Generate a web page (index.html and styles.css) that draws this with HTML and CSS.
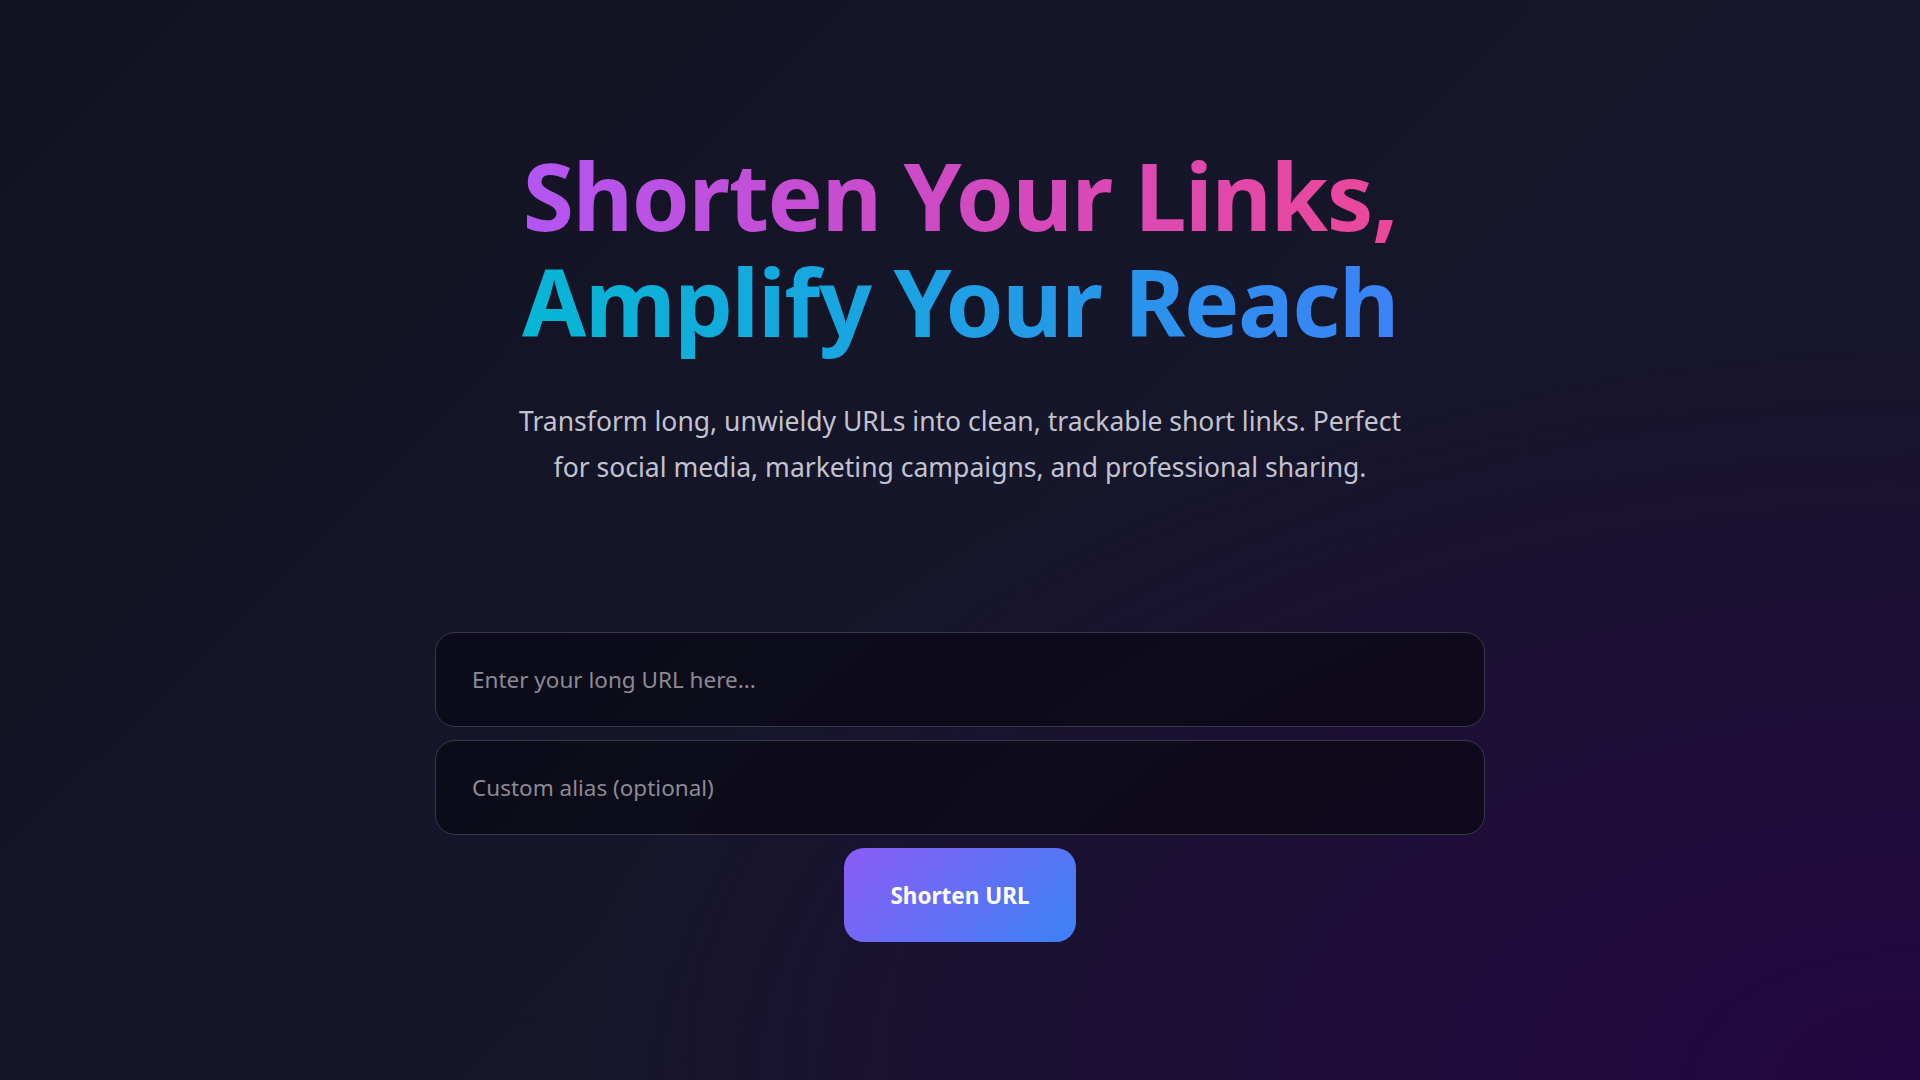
FILE: index.html
```html
<!DOCTYPE html>
<html lang="en">
<head>
<meta charset="utf-8">
<title>Shorten Your Links</title>
<link rel="stylesheet" href="styles.css">
</head>
<body>
<main class="page">
  <section class="hero">
    <h1 class="title">Shorten Your Links,<br>Amplify Your Reach</h1>
    <p class="subtitle">Transform long, unwieldy URLs into clean, trackable short links. Perfect for social media, marketing campaigns, and professional sharing.</p>
  </section>
  <form class="shorten-form" onsubmit="return false;">
    <input class="field" type="text" placeholder="Enter your long URL here...">
    <input class="field" type="text" placeholder="Custom alias (optional)">
    <button class="submit" type="submit">Shorten URL</button>
  </form>
</main>
</body>
</html>
```
FILE: styles.css
```css
* { box-sizing: border-box; }
html, body { margin: 0; padding: 0; height: 100%; }
body {
  font-family: "Noto Sans", "Open Sans", sans-serif;
  color: #e5e5ef;
  background:
    radial-gradient(ellipse 70% 70% at 100% 100%, rgba(36, 6, 66, 0.95) 0%, rgba(36, 6, 66, 0) 100%),
    linear-gradient(135deg, #121220 0%, #16162b 50%, #17152c 100%);
  min-height: 1080px;
  overflow: hidden;
}
.page {
  display: flex;
  flex-direction: column;
  align-items: center;
  padding-top: 142px;
}
.hero {
  display: flex;
  flex-direction: column;
  align-items: center;
  text-align: center;
}
.title {
  margin: 0 0 -12px;
  padding-bottom: 12px;
  font-size: 93px;
  line-height: 106px;
  font-weight: 700;
  letter-spacing: -1.4px;
  text-align: center;
  color: transparent;
  background-image:
    linear-gradient(90deg, #b256f2 0%, #d04ac2 50%, #ec4899 100%),
    linear-gradient(90deg, #06b6d4 0%, #1fa0e4 50%, #3b82f6 100%);
  background-size: 100% 114px, 100% 120px;
  background-position: 0 0, 0 114px;
  background-repeat: no-repeat;
  -webkit-background-clip: text;
  background-clip: text;
}
.subtitle {
  margin: 44px 0 0;
  max-width: 895px;
  font-size: 26.5px;
  line-height: 46px;
  color: #c3c3d0;
}
.shorten-form {
  margin-top: 142px;
  width: 1050px;
  display: flex;
  flex-direction: column;
  align-items: center;
  gap: 13px;
}
.field {
  width: 100%;
  height: 95px;
  padding: 0 36px;
  border: 1px solid #3a3848;
  border-radius: 20px;
  background: rgba(10, 9, 20, 0.72);
  color: #e5e5ef;
  font-family: inherit;
  font-size: 22.5px;
  outline: none;
}
.field::placeholder { color: #8c8a96; }
.submit {
  width: 232px;
  height: 94px;
  border: none;
  border-radius: 20px;
  background: linear-gradient(135deg, #8b5cf6 0%, #3b82f6 100%);
  color: #ffffff;
  font-family: inherit;
  font-size: 22.5px;
  font-weight: 700;
  cursor: pointer;
}
```
